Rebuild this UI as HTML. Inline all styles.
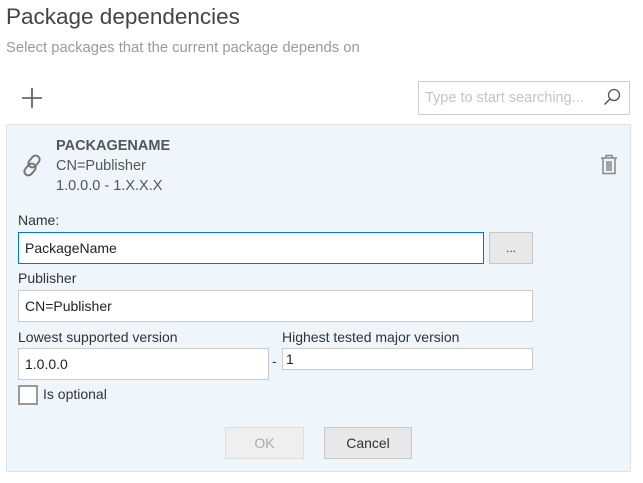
<!DOCTYPE html>
<html><head><style>
*{box-sizing:border-box;margin:0;padding:0}
body{width:643px;height:483px;background:#fff;font-family:"Segoe UI","Liberation Sans",sans-serif;color:#333;position:relative;overflow:hidden;font-size:14px}
.a{position:absolute}
.inp{position:absolute;background:#fff;border:1px solid #ccc;padding-left:6px;font-size:14px;display:flex;align-items:center;color:#222}
.btn{position:absolute;background:#e8e8e8;border:1px solid #c8c8c8;display:flex;align-items:center;justify-content:center;font-size:14px}
</style></head><body>
<div class="a" style="left:6px;top:4px;font-size:22.5px;color:#444;font-weight:300">Package dependencies</div>
<div class="a" style="left:6px;top:40px;font-size:14.8px;color:#9a9a9a">Select packages that the current package depends on</div>
<svg class="a" style="left:22px;top:88px" width="20" height="20"><path d="M10 0V20M0 10H20" stroke="#555" stroke-width="1.6"/></svg>
<div class="inp" style="left:418px;top:81px;width:212px;height:34px;color:#c4c4c4;font-size:14.5px">Type to start searching...</div>
<svg class="a" style="left:603px;top:88px" width="18" height="18"><circle cx="11" cy="7" r="5.5" fill="none" stroke="#555" stroke-width="1.3"/><path d="M7 11L1.5 16.5" stroke="#555" stroke-width="1.5"/></svg>
<div class="a" style="left:6px;top:124px;width:625px;height:348px;background:#eef5fb;border:1px solid #dde3e8"></div>
<svg class="a" style="left:21px;top:153px" width="24" height="26"><g fill="none" stroke="#777" stroke-width="2"><rect x="9" y="2" width="8" height="13" rx="4" transform="rotate(40 13 8.5)"/><rect x="5" y="10" width="8" height="13" rx="4" transform="rotate(40 9 16.5)"/></g></svg>
<div class="a" style="left:56px;top:136px;font-weight:bold;color:#555;line-height:20px;font-size:14.5px">PACKAGENAME</div>
<div class="a" style="left:56px;top:156px;color:#555;line-height:20px;font-size:14.5px">CN=Publisher</div>
<div class="a" style="left:56px;top:176px;color:#555;line-height:20px;font-size:14.5px">1.0.0.0 - 1.X.X.X</div>
<svg class="a" style="left:600px;top:154px" width="18" height="21"><g fill="none" stroke="#888" stroke-width="1.5"><path d="M1 4H17M6 4V1.5H12V4M3 4V19.5H15V4M7 7V17M9 7V17M11 7V17"/></g></svg>
<div class="a" style="left:18px;top:212px">Name:</div>
<div class="inp" style="left:18px;top:232px;width:466px;height:32px;border-color:#0078d7">PackageName</div>
<div class="btn" style="left:489px;top:232px;width:44px;height:32px;font-size:12px">...</div>
<div class="a" style="left:18px;top:270px">Publisher</div>
<div class="inp" style="left:18px;top:290px;width:515px;height:32px">CN=Publisher</div>
<div class="a" style="left:18px;top:329px">Lowest supported version</div>
<div class="inp" style="left:18px;top:348px;width:251px;height:32px">1.0.0.0</div>
<div class="a" style="left:272px;top:353px">-</div>
<div class="a" style="left:282px;top:329px">Highest tested major version</div>
<div class="inp" style="left:282px;top:348px;width:251px;height:22px;padding-left:3px">1</div>
<div class="a" style="left:18px;top:385px;width:20px;height:20px;border:2px solid #999;background:#fff"></div>
<div class="a" style="left:43px;top:386px">Is optional</div>
<div class="btn" style="left:225px;top:427px;width:79px;height:32px;background:#efefef;border-color:#ddd;color:#aaa">OK</div>
<div class="btn" style="left:324px;top:427px;width:88px;height:32px">Cancel</div>
</body></html>
